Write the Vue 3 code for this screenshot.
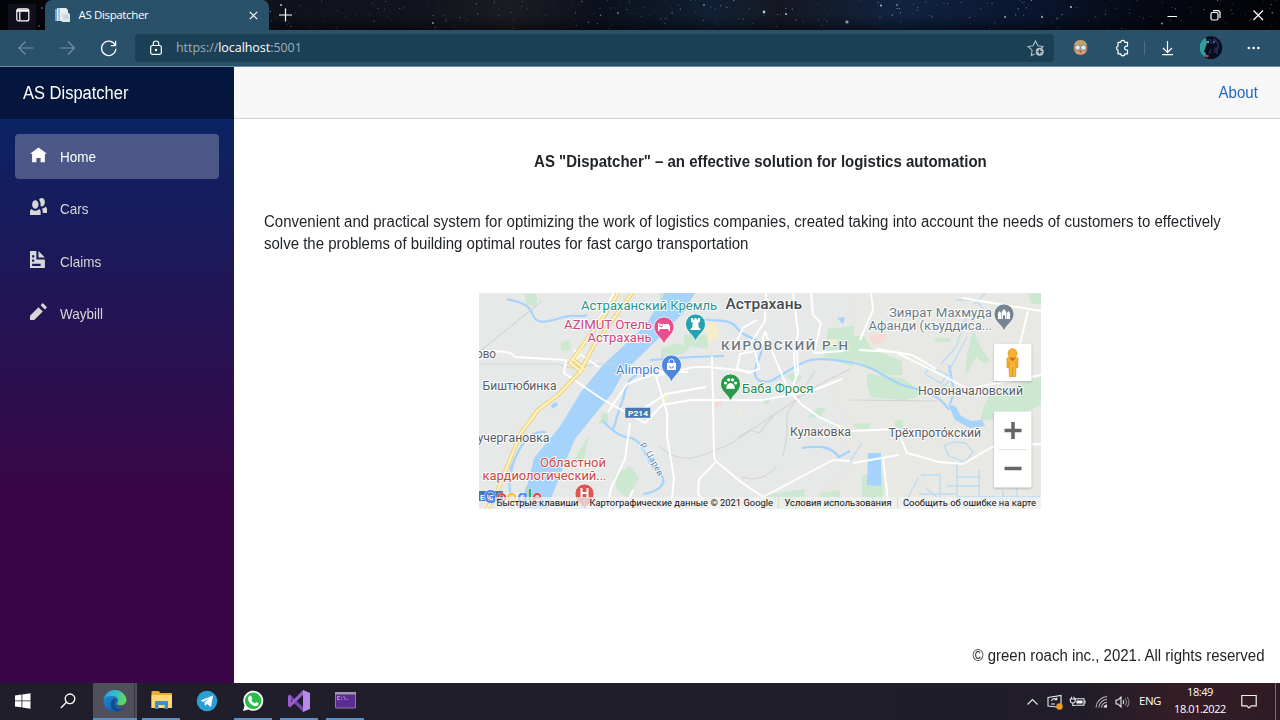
<script setup>
const nav = [
  { label: 'Home', active: true, path: 'M4 .7l-4 3h1v4h2v-2h2v2h2v-4.03l1 .03-4-3z' },
  { label: 'Cars', path: 'M5.5 0c-.51 0-.95.35-1.22.88.45.54.72 1.28.72 2.13 0 .29-.03.55-.09.81.19.11.38.19.59.19.83 0 1.5-.9 1.5-2s-.67-2-1.5-2zm-3 1c-.83 0-1.5.9-1.5 2s.67 2 1.5 2 1.5-.9 1.5-2-.67-2-1.5-2zm4.75 3.16c-.43.51-1.02.82-1.69.84.27.38.44.84.44 1.34v.66h2v-1.66c0-.52-.31-.97-.75-1.19zm-6.5 1c-.44.22-.75.67-.75 1.19v1.66h5v-1.66c0-.52-.31-.97-.75-1.19-.45.53-1.06.84-1.75.84s-1.3-.32-1.75-.84z' },
  { label: 'Claims', path: 'M0 0v8h7v-4h-4v-4h-3zm4 0v3h3l-3-3zm-3 2h1v1h-1v-1zm0 2h1v1h-1v-1zm0 2h4v1h-4v-1z' },
  { label: 'Waybill', path: 'M6 0l-1 1 2 2 1-1-2-2zm-2 2l-4 4v2h2l4-4-2-2z' }
]

// Deterministic star field behind the tab strip
let seed = 41
const rnd = () => (seed = (seed * 16807) % 2147483647) / 2147483647
const stars = Array.from({ length: 330 }, () => ({
  x: 270 + rnd() * 1010, y: rnd() * 29, r: 0.25 + rnd() * 0.42, o: 0.2 + rnd() * 0.55
}))
const bright = [[764, 12, 1.4], [847, 22, 1.6], [786, 14, 1], [881, 5.5, 1], [897, 5, .8], [618, 13, .8], [704, 5, .8], [433, 23, 1], [1071, 7, 1], [1042, 17, 1], [1005, 17, .9], [1162, 23.5, 1], [281, 5, 1], [42, 8, .7], [39, 26, .8]]

const labels = [
  { t: 'Астраханский Кремль', x: 581, y: 310.3, w: 136, c: '#26918f', s: 12.5 },
  { t: 'Астрахань', x: 725.5, y: 308.5, w: 76.5, c: '#444b50', s: 14.5, b: 500 },
  { t: 'AZIMUT Отель', x: 564, y: 329, w: 88, c: '#d0427c', s: 12.8 },
  { t: 'Астрахань', x: 587.5, y: 342.3, w: 64, c: '#d0427c', s: 12.8 },
  { t: 'КИРОВСКИЙ Р-Н', x: 721, y: 350.3, w: 127, c: '#6b7580', s: 13.4, b: 500, spaced: true },
  { t: 'ово', x: 476, y: 357.5, w: 20, c: '#565b60', s: 12 },
  { t: 'Alimpic', x: 616, y: 374, w: 43.5, c: '#4a79cc', s: 12.8 },
  { t: 'Биштюбинка', x: 482.5, y: 390.2, w: 74, c: '#565b60', s: 12.3 },
  { t: 'Баба Фрося', x: 742, y: 392.7, w: 71.5, c: '#278b49', s: 12.8 },
  { t: 'учергановка', x: 477.5, y: 442, w: 72, c: '#565b60', s: 12.3 },
  { t: 'Кулаковка', x: 790, y: 435.7, w: 61, c: '#565b60', s: 12.3 },
  { t: 'Трёхпрото́кский', x: 888.5, y: 436.7, w: 92.5, c: '#565b60', s: 12.3 },
  { t: 'Новоначаловский', x: 918, y: 395.2, w: 105, c: '#565b60', s: 12.3 },
  { t: 'Зиярат Махмуда', x: 889, y: 317, w: 103, c: '#6b7b88', s: 12.5 },
  { t: 'Афанди (къуддиса...', x: 868.5, y: 330, w: 123.5, c: '#6b7b88', s: 12.5 },
  { t: 'Областной', x: 540, y: 467, w: 66, c: '#cc4540', s: 12.8 },
  { t: 'кардиологический...', x: 482.5, y: 480.3, w: 124, c: '#cc4540', s: 12.8 }
]
const credits = [
  { t: 'Быстрые клавиши', x: 496.5, w: 82 },
  { t: 'Картографические данные © 2021 Google', x: 589.5, w: 183.5 },
  { t: 'Условия использования', x: 784.5, w: 107 },
  { t: 'Сообщить об ошибке на карте', x: 903, w: 133 }
]
</script>

<template>
  <div class="desktop">
    <header class="tabs">
      <svg class="sky" viewBox="0 0 1280 30" width="1280" height="30">
        <defs>
          <linearGradient id="sky">
            <stop offset="0" stop-color="#030407" /><stop offset=".2" stop-color="#10111a" /><stop offset=".33" stop-color="#12141d" />
            <stop offset=".4" stop-color="#1b1b22" /><stop offset=".47" stop-color="#0c101c" /><stop offset=".56" stop-color="#102034" />
            <stop offset=".61" stop-color="#151722" /><stop offset=".7" stop-color="#10233f" /><stop offset=".8" stop-color="#0a1630" />
            <stop offset=".9" stop-color="#060812" /><stop offset="1" stop-color="#020306" />
          </linearGradient>
          <linearGradient id="dusk" x2="0" y2="1"><stop offset=".5" stop-color="#000" stop-opacity="0" /><stop offset="1" stop-color="#000" stop-opacity=".45" /></linearGradient>
        </defs>
        <rect width="1280" height="30" fill="url(#sky)" />
        <circle v-for="(s, i) in stars" :key="i" :cx="s.x" :cy="s.y" :r="s.r" fill="#c8d4e6" :opacity="s.o" />
        <circle v-for="(b, i) in bright" :key="'b' + i" :cx="b[0]" :cy="b[1]" :r="b[2]" fill="#e4edf7" opacity=".8" />
        <rect width="1280" height="30" fill="url(#dusk)" />
      </svg>
      <div class="tab-menu">
        <svg width="14" height="14" viewBox="0 0 14 14" fill="none" stroke="#fff" stroke-width="1.2"><rect x=".8" y=".9" width="12" height="12" rx="2" /><path d="M1 3.2h12M1 2h12M3.8 4v8.5" /></svg>
      </div>
      <div class="tab">
        <svg width="17" height="17" viewBox="0 0 17 17"><path d="M1 2h4v12H1z" fill="#6fa6cf" /><path d="M3 1h9l2 2v11H3z" fill="#e9eef2" /><path d="M4 1h2v13H4z" fill="#9fc5df" /><path d="M8 6h7l1 1.500V15H8z" fill="#dbe4ea" /><path d="M9.500 9h5M9.500 11h5" stroke="#b5c5cf" /></svg>
        <span class="tab-title">AS Dispatcher</span>
        <svg width="9" height="9" viewBox="0 0 9 9" stroke="#fff" stroke-width="1.200"><path d="M.8.8l7.400 7.400M8.200.8L.8 8.200" /></svg>
      </div>
      <svg class="plus" width="14" height="14" viewBox="0 0 14 14" stroke="#fff" stroke-width="1.200"><path d="M7.500 .5v13M1 7h13" /></svg>
      <svg class="win" width="100" height="14" viewBox="0 0 100 14" fill="none" stroke="#fff" stroke-width="1.200">
        <path d="M.5 8.500h9.500M86.500 2.500l9.500 9.500M96 2.500L86.500 12" /><rect x="44" y="4.500" width="7" height="7.500" rx="1.500" /><path d="M46 2.600h4.600a2.400 2.400 0 0 1 2.400 2.400v5" />
      </svg>
    </header>

    <div class="toolbar">
      <svg class="navs" width="120" height="20" viewBox="0 0 120 20" fill="none" stroke-width="1.100">
        <g stroke="#7993a4"><path d="M33.500 10H19M25.500 3.500L19 10l6.500 6.500M60 10h14.500M68 3.500l6.500 6.500-6.500 6.500" /></g>
        <path d="M115.200 7.200a7.200 7.200 0 1 0 .7 3.600M115.600 2.800v4.800h-4.800" stroke="#fff" stroke-width="1.250" />
      </svg>
      <div class="address">
        <svg width="12" height="16" viewBox="0 0 12 16" fill="none" stroke="#fff" stroke-width="1.200"><rect x=".7" y="5.500" width="10.600" height="8.800" rx="1.500" /><path d="M3.300 5.500V3.700a2.700 2.700 0 0 1 5.400 0v1.800" /><circle cx="6" cy="10" r=".6" fill="#fff" /></svg>
        <span class="url">https://<b>localhost</b>:5001</span>
        <svg class="star" width="18" height="18" viewBox="0 0 18 18" fill="none" stroke="#b1bec7" stroke-width="1.100"><path d="M7.500 15l-3.200 1.500.8-5.300L1 7.500l5-.8L8.500 2 11 6.700l5 .8-2 1.800" /><circle cx="12.700" cy="12.700" r="4" fill="#b9c3ca" stroke="none" /><path d="M12.700 10.300v4.800M10.300 12.700h4.800" stroke="#1c3e52" stroke-width="1.300" /></svg>
      </div>
      <svg class="tools" width="204" height="30" viewBox="1062 33 204 30" fill="none">
        <circle cx="1080.500" cy="48" r="6.900" fill="#c28a6b" /><path d="M1074 45a6.700 6.700 0 0 1 13 0z" fill="#b9a175" /><path d="M1075 51h11l-2 3h-7z" fill="#dc9c82" />
        <circle cx="1077.600" cy="47.600" r="2.600" fill="#d9edec" stroke="#687570" stroke-width=".6" /><circle cx="1083.400" cy="47.600" r="2.600" fill="#d9edec" stroke="#687570" stroke-width=".6" /><circle cx="1080.500" cy="51.700" r="1" fill="#9e514a" />
        <path d="M1118 42.300h2.800a2 2 0 0 1 4 0h2.700v3.900h-1a1.900 1.900 0 0 0 0 3.800h1v3.800h-2.700a2 2 0 0 1-4 0h-2.800v-3.700a2.100 2.100 0 0 1 0-4z" stroke="#fff" stroke-width="1.200" stroke-linejoin="round" />
        <path d="M1144.500 41v14" stroke="#536f80" />
        <path d="M1167.500 41v11M1163 48l4.500 4.500L1172 48M1162 54.700h11" stroke="#fff" stroke-width="1.200" />
        <circle cx="1210.800" cy="47.700" r="11.400" fill="#090c1d" /><path d="M1206 37.400a11.300 11.300 0 0 0-1 20l1-4-2-2 3-8z" fill="#329b9f" />
        <path d="M1208 40h3v3h3v-4l4 4v5h-3v5M1211 49l-2 5M1217 48v6" stroke="#26396a" stroke-width="1.200" /><circle cx="1208" cy="42" r="1" fill="#a9cde0" /><circle cx="1214" cy="42" r=".8" fill="#8297d1" /><path d="M1205 54.500l4 1-1 2-3-1z" fill="#cf4848" />
        <g fill="#fff"><circle cx="1248.800" cy="48" r="1.300" /><circle cx="1253.600" cy="48" r="1.300" /><circle cx="1258.400" cy="48" r="1.300" /></g>
      </svg>
    </div>

    <div class="page">
      <aside class="sidebar">
        <div class="brand"><span>AS Dispatcher</span></div>
        <nav>
          <a v-for="n in nav" :key="n.label" :class="{ active: n.active }">
            <svg width="17" height="17" viewBox="0 0 8 8" fill="currentColor"><path :d="n.path" /></svg><span>{{ n.label }}</span>
          </a>
        </nav>
      </aside>
      <main>
        <div class="top-row"><a>About</a></div>
        <section class="content">
          <h1>AS "Dispatcher" – an effective solution for logistics automation</h1>
          <p>Convenient and practical system for optimizing the work of logistics companies, created taking into account the needs of customers to effectively<br>solve the problems of building optimal routes for fast cargo transportation</p>
          <svg class="map" viewBox="479 293 562 216" width="562" height="216">
            <rect x="479" y="293" width="562" height="216" fill="#e7e8e8" />
            <path d="M850 293h191v216H800l50-40-15-90 20-30z" fill="#e9e7e3" opacity=".8" />
            <g fill="#cce8d0">
              <path d="M524 294h13v13l-10-3zM561 342l8-2 2 10h-10zM602 413l6 1v8l-9 2zM574 460l15-25-5 24-9 8zM618 473l12-7 9 12-12 20-9-7-5-14zM579 495l8 6-3 8h-13z" />
              <path d="M660 293h13l-6 16-7 12zM661 349l15-6 14 4-5 6-24 5zM684 335h24v14l-24-4zM828 329l26-3v41l-30-10zM763 398h6v6h-6zM808 417l10-9h8l-6 9-8 1zM786 376l10-5 6 7-7 6zM765 495l39-6 4 20h-46zM820 493l20-3v19h-22z" />
              <path d="M850 335l15 2 7 12 30 12v14h-16l-36-17zM867 374l35 4 23 17-21 5-33-3-4-12zM973 330l8 18 9 13-6 3-8-7-11 20 2-22zM984 405l57-15v15l-26 12-35 4zM990 394l51-17v22l-58 10zM853 424l16-1 2 7-15-1zM862 475h21v30h-21zM1028 293h13v11h-9zM895 420h8v8h-8zM935 338h15v4h-15z" />
            </g>
            <g fill="#f5edca"><path d="M705 325l10-5 4 16-11 8zM823 340l14-1v7h-14zM738 412l5-3-2 7zM661 394h8l-2 8h-6z" /></g>
            <path d="M869 336l16-3 2 6-14 6zM715 402h6v5h-6z" fill="#f7dad6" />
            <g fill="#a5d3fb">
              <path d="M665 293h30l-12 20-18 19-42 41-10 19-22 27-16 20-13 31-15 39h-30l11-26 6-25 25-30 22-36 22-27 43-40z" />
              <path d="M868 453h13v33l-14-1zM948 404l8 3 5 9 10 5 11-1 3 6-15 2-15-8zM551 405l5-3 2 3-6 4zM837 318l8-1-2 7z" />
            </g>
            <g fill="none" stroke="#a5d3fb" stroke-width="2.200">
              <path d="M507 299c11 3 21 4 25 14 5 14 16 8 32 4 10-3 17 1 23-2M603 421c8 8 14 15 28 17 16 5 13 26 31 38 5 8-4 16-19 18" />
              <path d="M637 375c-14 6-11 22-17 32l-7 23M510 470c8-18 15-40 36-38M515 457c-5 18-8 29-3 42M702 319c16 3 28-1 35 9s15 8 22 14c8 9-5 21-4 31 0 8 8 10 16 8 22-12 27-18 40-21 14-2 26 0 44 3M850 362c25 4 34 16 52 23 20 5 37 9 47 25M650 360l43-3 31-1M802 448c20-3 29-1 37 9l11-6M949 365l5 28-4 11" />
            </g>
            <g fill="none" stroke="#bcdcf2" stroke-width="1.300">
              <path d="M925 374l5-8 22 11-7 9zM941 383l7-9M956 300h20l12 15M966 318l-10 29-15 17M967 337l-18 34M974 304l11-10M944 446l9-4 13 1 7 9-8 10-16-6zM918 478l-14 28M921 475h19v31M957 464v41M979 470v35M1003 490v18M1017 470v35M919 494h37M947 486h33M956 477h25M957 497h83M990 499h47M926 488l11 9M862 443l-12 18" />
            </g>
            <g fill="none" stroke="#d3d4d6" stroke-width="1.100">
              <path d="M479 364h80c22 11 25-4 54 1M479 352l63-51M660 447c22 20 40 10 72-4l86-58 32-16M850 400l87 1M815 371l-28 43v22l-4 20M738 438l12-8 9 3 16-19M742 477c16 5 26-1 35-11" />
            </g>
            <g fill="none" stroke="#fff" stroke-width="1.900">
              <path d="M479 351c30 0 33 1 36 6l51 3-2 13 38 26 43 24 17-18 29-5h71l50-9 30-12M614 293l-40 70M574 350l25 17M630 423l-5 36-14 29-4 21M608 412l19-28 33-12h28M633 490l-8 19M660 293l-5-16M655 373l12 40v23l7 42-3 31M638 412l28-18 40-7M712 356l2 101 2 5-17 17-1 15 16 17M717 462l24 20 22 15 70-37 17 1M656 376l38-9 14 0 30 3 14 2M737 369l3-15 15-3 4 18-10 4zM760 351l5-20M735 345l8-17 14-8M765 331l7 20 16 38 13 15 18 13 26 12M766 293l-1 28-20 31M793 385l5-12-1-25M793 293l5 40-4 22 2 25M811 293l2 22 8 8-7 30 30-2M859 350l36 2 43 21 30 16 35-7 38-7M871 293l2 17-13 30M877 349l35 6 24 14M850 431l47-2 10 24 32 9 24 2 29-17 49-3M853 463l46-8M883 457l6 52M962 298l79 13M1028 311l-8 33" />
            </g>
            <g fill="none" stroke="#e9ce77" stroke-width="4"><path d="M632 293L593 347 580 372 558 395 538 410 521 433 511 457 498 490 487 509M618 293L609 309 570 363 582 372M572 358l13 12" /></g>
            <g fill="none" stroke="#fff3bb" stroke-width="2.200"><path d="M632 293L593 347 580 372 558 395 538 410 521 433 511 457 498 490 487 509M618 293L609 309 570 363 582 372M572 358l13 12" /></g>
            <g class="labels">
              <text v-for="l in labels" :key="l.t + l.y" :x="l.x" :y="l.y" :textLength="l.w" :lengthAdjust="l.spaced ? 'spacing' : 'spacingAndGlyphs'" :fill="l.c" :font-size="l.s" :font-weight="l.b || 400">{{ l.t }}</text>
              <text transform="translate(641 444) rotate(62)" textLength="37" fill="#5083b4" font-size="9">р. Царев</text>
            </g>
            <g stroke="#fff" stroke-width=".7">
              <path d="M664 345c-1-7-10-10-10-18a10 10 0 0 1 20 0c0 8-9 11-10 18z" fill="#e7508d" />
              <path d="M695.500 342c-1-7-10-10-10-18a10 10 0 0 1 20 0c0 8-9 11-10 18z" fill="#26a2b0" />
              <path d="M671.500 383c-1-7-10-10-10-18a10 10 0 0 1 20 0c0 8-9 11-10 18z" fill="#4d87df" />
              <path d="M730.500 402c-1-7-10-10-10-18a10 10 0 0 1 20 0c0 8-9 11-10 18z" fill="#2b984b" />
              <path d="M1004 332c-1-7-10-10-10-18a10 10 0 0 1 20 0c0 8-9 11-10 18z" fill="#748490" />
              <path d="M584.500 509c-1-3-9.500-7-9.500-15.500a9.500 9.500 0 0 1 19 0c0 8.500-8.500 12.500-9.500 15.500z" fill="#de544e" />
            </g>
            <g fill="#fff">
              <path d="M658 323h1.500v4h3v-3h6l1.500 2v5h-1.500v-2h-9v2H658z" /><circle cx="661" cy="325" r="1.200" />
              <path d="M691 318h2v1.500h1.500V318h2v1.500h1.500V318h2v4h-1.500v5l2 2v1h-10v-1l2-2v-5H691z" />
              <path d="M667 363h9v7h-9z" /><path d="M669 363v-1.500a2.500 2.500 0 0 1 5 0v1.500" fill="none" stroke="#fff" />
              <path d="M669.500 366a2 2 0 0 0 4 0" fill="none" stroke="#4d87df" />
              <circle cx="725.500" cy="383" r="1.600" /><circle cx="728.700" cy="379.800" r="1.600" /><circle cx="732.500" cy="379.800" r="1.600" /><circle cx="735.600" cy="383" r="1.600" /><path d="M730.500 383c3 0 6 5.500 3.300 6-2 0-4-.5-6.500 0-3-.5.500-6 3.200-6z" />
              <path d="M998 319v-6l1.500-2 1.500 2v6zM1007 319v-6l1.500-2 1.500 2v6zM1001.500 319v-7l2.500-3 2.500 3v7h-1.500v-3a1 1 0 0 0-2 0v3z" />
              <path d="M580.500 488h2v4h4v-4h2v10h-2v-4h-4v4h-2z" />
            </g>
            <rect x="625" y="407.500" width="25.500" height="10.500" fill="#4777ae" stroke="#fff" stroke-width=".4" /><text x="628" y="416" textLength="20" lengthAdjust="spacingAndGlyphs" class="road">Р214</text>
            <rect x="479" y="491" width="24" height="10" fill="#4777ae" /><text x="480" y="499.500" class="road">E40</text>
            <text class="logo" x="484" y="502.500" textLength="58" lengthAdjust="spacingAndGlyphs"><tspan fill="#4285f4">G</tspan><tspan fill="#ea4335">o</tspan><tspan fill="#fbbc05">o</tspan><tspan fill="#4285f4">g</tspan><tspan fill="#34a853">l</tspan><tspan fill="#ea4335">e</tspan></text>
            <rect x="495" y="497" width="546" height="12" fill="#f4f4f4" opacity=".7" />
            <path d="M584.500 497v12M778.500 497v12M897.500 497v12" stroke="#d9dada" />
            <text v-for="c in credits" :key="c.t" :x="c.x" y="506.200" :textLength="c.w" lengthAdjust="spacingAndGlyphs" class="credit">{{ c.t }}</text>
            <g class="control"><rect x="994" y="344" width="37.500" height="37" rx="1" /><rect x="994" y="411.500" width="37.500" height="76" rx="1" /></g>
            <path d="M998.500 449.500h28" stroke="#e4e4e4" /><path d="M1004.500 430.500h17M1013 422v17M1004.500 468.500h17" stroke="#666" stroke-width="3.500" />
            <g fill="#f9b331" stroke="#d88a1c" stroke-width=".7"><path d="M1007 358.500q1-2 4-2h3q3 0 4 2l-.2 9h-2l-.3 9h-6l-.5-9h-2z" /><circle cx="1012.500" cy="353.300" r="4.500" /></g><path d="M1009.500 358l3 3.500 3.500-3.500z" fill="#dd6428" /><path d="M1012.500 367v9M1009 361v6M1016 361v6" stroke="#d88a1c" stroke-width=".8" />
          </svg>
        </section>
        <footer><span>© green roach inc., 2021. All rights reserved</span></footer>
      </main>
    </div>

    <div class="taskbar">
      <div class="slot"><svg width="16" height="16" viewBox="0 0 16 16" fill="#fff"><path d="M0 2.400l6.500-.9v6H0zM7.300 1.400L15.500.2v7.300H7.300zM0 8.300h6.500v6L0 13.500zM7.300 8.300h8.200v7.500l-8.200-1.200z" /></svg></div>
      <div class="slot"><svg width="16" height="16" viewBox="0 0 16 16" fill="none" stroke="#fff" stroke-width="1.300"><circle cx="10" cy="5.800" r="4.800" /><path d="M6.500 9.300L.8 15" /></svg></div>
      <div class="slot edge">
        <svg width="24" height="24" viewBox="0 0 24 24"><defs><linearGradient id="eg" x2="1" y2=".3"><stop stop-color="#279fe1" /><stop offset=".55" stop-color="#35bfc9" /><stop offset="1" stop-color="#60d65d" /></linearGradient><linearGradient id="eb" x2=".5" y2="1"><stop stop-color="#2295dc" /><stop offset="1" stop-color="#165cae" /></linearGradient></defs>
          <circle cx="11.500" cy="12" r="11" fill="url(#eb)" />
          <path d="M1 10A11.500 11.500 0 0 1 23.500 10.500c0 4-3 6-6 6-3 0-4-1.200-3-2.800C17 10 13 6.500 9 7c-4 .2-6.500 1-8 3z" fill="url(#eg)" />
          <path d="M10 10c-4 4-2.500 11 4 12.500 3 .3 6-1.300 7.700-3.800-4 2-10 1.500-10-4 0-2 1-3 1.800-3.300C13 9 11 9 10 10z" fill="#174b8d" />
          <path d="M23.500 12.500q-2 4-6 4-3 0-3-2-1 4 3 4.800 2.500.4 4.800-1.300 2-3 1.200-5.500z" fill="#50505b" /></svg>
      </div>
      <div class="slot run"><svg width="21" height="19" viewBox="0 0 21 19"><path d="M.5 2V1a1 1 0 0 1 1-1h6l2 2H20a1 1 0 0 1 1 1v14H.5z" fill="#e9ad35" /><path d="M.5 4h20.500v13H.5z" fill="#ffd773" /><path d="M4 18v-7q0-1 1-1h11q1 0 1 1v7h-3.500v-4h-6v4z" fill="#3e91c7" /></svg></div>
      <div class="slot"><svg width="22" height="22" viewBox="0 0 22 22"><circle cx="11" cy="11" r="10.300" fill="#289fd5" /><path d="M4.500 10.600l12.500-5-2 11.400-4-3-2 2-.5-3.500 5-4.800-6.300 4.200z" fill="#fff" /></svg></div>
      <div class="slot run"><svg width="22" height="22" viewBox="0 0 22 22"><path d="M1 21l1.500-5.500a10 10 0 1 1 4 4z" fill="#fff" /><circle cx="11.200" cy="10.800" r="8.300" fill="#2abb4a" /><path d="M7.500 5.800l1.600-.1 1.200 3-1.100 1.400q1.200 2.300 3.600 3.300l1.300-1.400 2.600 1.300c0 4-4.500 3.500-7.500.9-3-2.700-4.500-6-1.700-8.400z" fill="#fff" /></svg></div>
      <div class="slot run"><svg width="24" height="24" viewBox="0 0 24 24"><path d="M1 7l2-1.500L17 19l-1 4L1.500 8.500z" fill="#7146ae" /><path d="M1 7v10l2 1.500L17 5l-1-4L4 13.500V7L3 5.500z" fill="#9660cc" /><path d="M16 1l7 3v16l-7 3z" fill="#b889ed" /></svg></div>
      <div class="slot run"><svg width="21" height="17" viewBox="0 0 21 17"><path d="M.5.500h20v15.500H.5z" fill="#5b2c91" stroke="#8d7aa4" /><path d="M0 0h21v2.500H0z" fill="#a496b5" /><text x="2" y="7.500" font-size="5" fill="#fff" font-family="Liberation Mono,monospace">C:\.</text></svg></div>
      <div class="tray">
        <svg width="100" height="20" viewBox="0 0 100 20" fill="none" stroke="#e8e8ec" stroke-width="1.100"><path d="M.5 12.500L5.500 7.500l5 5" /><path d="M21 5.500l13-2v12l-13-1.500z" /><path d="M24.500 9a3.500 3.500 0 0 1 5-2M29.800 5.500v2.300h-2.300M24 12h4" /><circle cx="32.500" cy="14.500" r="3.200" fill="#f39a26" stroke="none" /><path d="M47.500 6.800h9.500v6.500H48.500" /><path d="M49.500 8.500h6v3h-6z" fill="#fff" stroke="none" /><path d="M58 8.500v3M44.500 4.800v2M47 4.800v2M43.300 7h5v1.500a2.500 2.500 0 0 1-5 0zM45.800 11v2.500h2.500" /><path d="M69 15.500A12 12 0 0 1 80 4.500M71.800 15.500a9 9 0 0 1 8.200-8.200M74.500 15.500a6 6 0 0 1 5.500-5.300" opacity=".75" /><path d="M77 15.500a3.500 3.500 0 0 1 3-2.600" /><circle cx="79" cy="14.800" r="1" fill="#fff" stroke="none" /><path d="M89 8h2l3-3v10l-3-3h-2zM96 8q1.500 2 0 4" /><path d="M98 6.500q3 3.500 0 7M100 5q4 5 0 10" opacity=".5" /></svg>
        <span class="lang">ENG</span>
        <div class="clock"><span>18:49</span><span>18.01.2022</span></div>
        <svg width="16" height="16" viewBox="0 0 16 16" fill="none" stroke="#eee" stroke-width="1.200"><path d="M.8 1.500h14.400v10.300h-5L8 14l-2.200-2.200h-5z" /></svg>
        <i class="peek"></i>
      </div>
    </div>
  </div>
</template>

<style>
body { margin: 0; overflow: hidden; }
</style>
<style scoped>
.desktop { width: 1280px; height: 720px; display: flex; flex-direction: column; overflow: hidden; font-family: "Liberation Sans", Arial, sans-serif; background: #fff; }
svg { display: block; flex: none; overflow: visible; }
.tabs { height: 30px; display: flex; align-items: center; position: relative; background: #090b12; }
.sky { position: absolute; inset: 0; }
.tab-menu { position: relative; width: 28px; height: 26px; box-sizing: border-box; margin: 3px 9px 0 8px; padding: 0 0 3px 1px; background: #10101d; display: flex; align-items: center; justify-content: center; }
.tab { position: relative; box-sizing: border-box; width: 224px; height: 30px; padding: 0 11px 0 9px; background: #29516a; border-radius: 7px 7px 0 0; display: flex; align-items: center; }
.tab-title { flex: 1; margin: -2px 0 0 7.500px; color: #fff; font: 11.500px "Open Sans", "Noto Sans", sans-serif; letter-spacing: -.36px; }
.plus { position: relative; margin: -1px 0 0 9px; }
.win { position: relative; margin: 0 13.500px 0 auto; }
.toolbar { height: 37px; box-sizing: border-box; background: #29516a; border-bottom: 1px solid #6f8b9c; display: flex; align-items: center; }
.navs { width: 120px; margin: -1px 15px 0 0; }
.address { width: 919px; height: 28px; background: #1b3f54; border-radius: 4px; display: flex; align-items: center; box-sizing: border-box; padding: 0 9px 0 14.500px; }
.url { margin: -1px 0 0 14.500px; flex: 1; color: #a0afb8; font: 12.500px "Open Sans", "Noto Sans", sans-serif; letter-spacing: -.05px; }
.url b { color: #fff; font-weight: 400; }
.tools { margin-left: 8px; }
.page { display: flex; height: 616px; }
.sidebar { width: 234px; background: linear-gradient(180deg, #052767 0%, #3a0647 70%); }
.brand { height: 52px; box-sizing: border-box; padding-left: 22.500px; line-height: 52px; color: #fff; font-size: 17.600px; background: rgba(0, 0, 0, .4); }
.brand span, nav a span, .top-row a, h1, p, footer span { display: inline-block; transform: scaleX(.9375); transform-origin: left; white-space: nowrap; }
nav { padding: 15px 15px 0; display: flex; flex-direction: column; gap: 7.500px; }
nav a { display: flex; align-items: center; height: 45px; box-sizing: border-box; padding-left: 15px; border-radius: 4px; color: #d7d7d7; font-size: 14.400px; }
nav a svg { margin: -5px 13px 0 0; }
nav a.active { background: rgba(255, 255, 255, .25); color: #fff; }
main { width: 1046px; display: flex; flex-direction: column; background: #fff; color: #212529; }
.top-row { height: 52px; box-sizing: border-box; border-bottom: 1px solid #d6d5d5; background: #f7f7f7; display: flex; align-items: center; justify-content: flex-end; padding-right: 22px; color: #2368bd; font-size: 16px; }
.top-row a { transform-origin: right; }
.content { flex: 1; display: flex; flex-direction: column; align-items: center; }
h1 { margin: 32px 0 0 7px; font-size: 16px; line-height: 22.500px; font-weight: 700; transform-origin: center; }
p { margin: 37px 0 0 30px; align-self: flex-start; font-size: 16px; line-height: 22.500px; }
.map { overflow: hidden; margin: 37.500px 0 0 6px; }
.labels text { font-family: Roboto, sans-serif; paint-order: stroke; stroke: #fff; stroke-width: 1.800px; stroke-linejoin: round; }
.road { font: 700 8px Roboto, sans-serif; fill: #fff; }
.logo { font: 500 19px Roboto, sans-serif; stroke: #fff; stroke-width: .7px; paint-order: stroke; }
.credit { font: 9.500px Roboto, sans-serif; fill: #111; }
.control { fill: #fff; filter: drop-shadow(0 1px 1px rgba(0, 0, 0, .25)); }
footer { height: 36px; text-align: right; padding-right: 15px; font-size: 16px; }
footer span { transform-origin: right; }
.taskbar { height: 37px; display: flex; align-items: stretch; background: linear-gradient(90deg, #211e2b 0%, #1f1d2a 72%, #211d28 85%, #351d26 92%, #2f1a23 100%); }
.slot { width: 46px; box-sizing: border-box; display: flex; align-items: center; justify-content: center; border-bottom: 2px solid transparent; }
.slot:first-child { width: 45px; }
.slot:nth-child(2) { width: 46px; margin-right: 2px; }
.slot.edge { width: 44px; background: linear-gradient(90deg, #50505b 41px, #363540 41px, #363540 42px, #50505b 42px); border-color: #5c8fc6; margin-right: 1px; }
.slot.run { background: linear-gradient(#5c8fc6, #5c8fc6) center bottom / 38px 2px no-repeat border-box; }
.tray { margin-left: auto; display: flex; align-items: center; color: #fff; font-family: "Open Sans", "Noto Sans", sans-serif; }
.lang { font-size: 11.500px; margin: -2px 0 0 12px; width: 24px; letter-spacing: -.5px; }
.clock { display: flex; flex-direction: column; align-items: center; width: 54px; font-size: 11px; line-height: 17px; letter-spacing: -.43px; margin: -3px 14px 0 10px; }
.peek { align-self: stretch; width: 1px; margin: 0 4px 0 18px; background: #796c74; }
</style>
